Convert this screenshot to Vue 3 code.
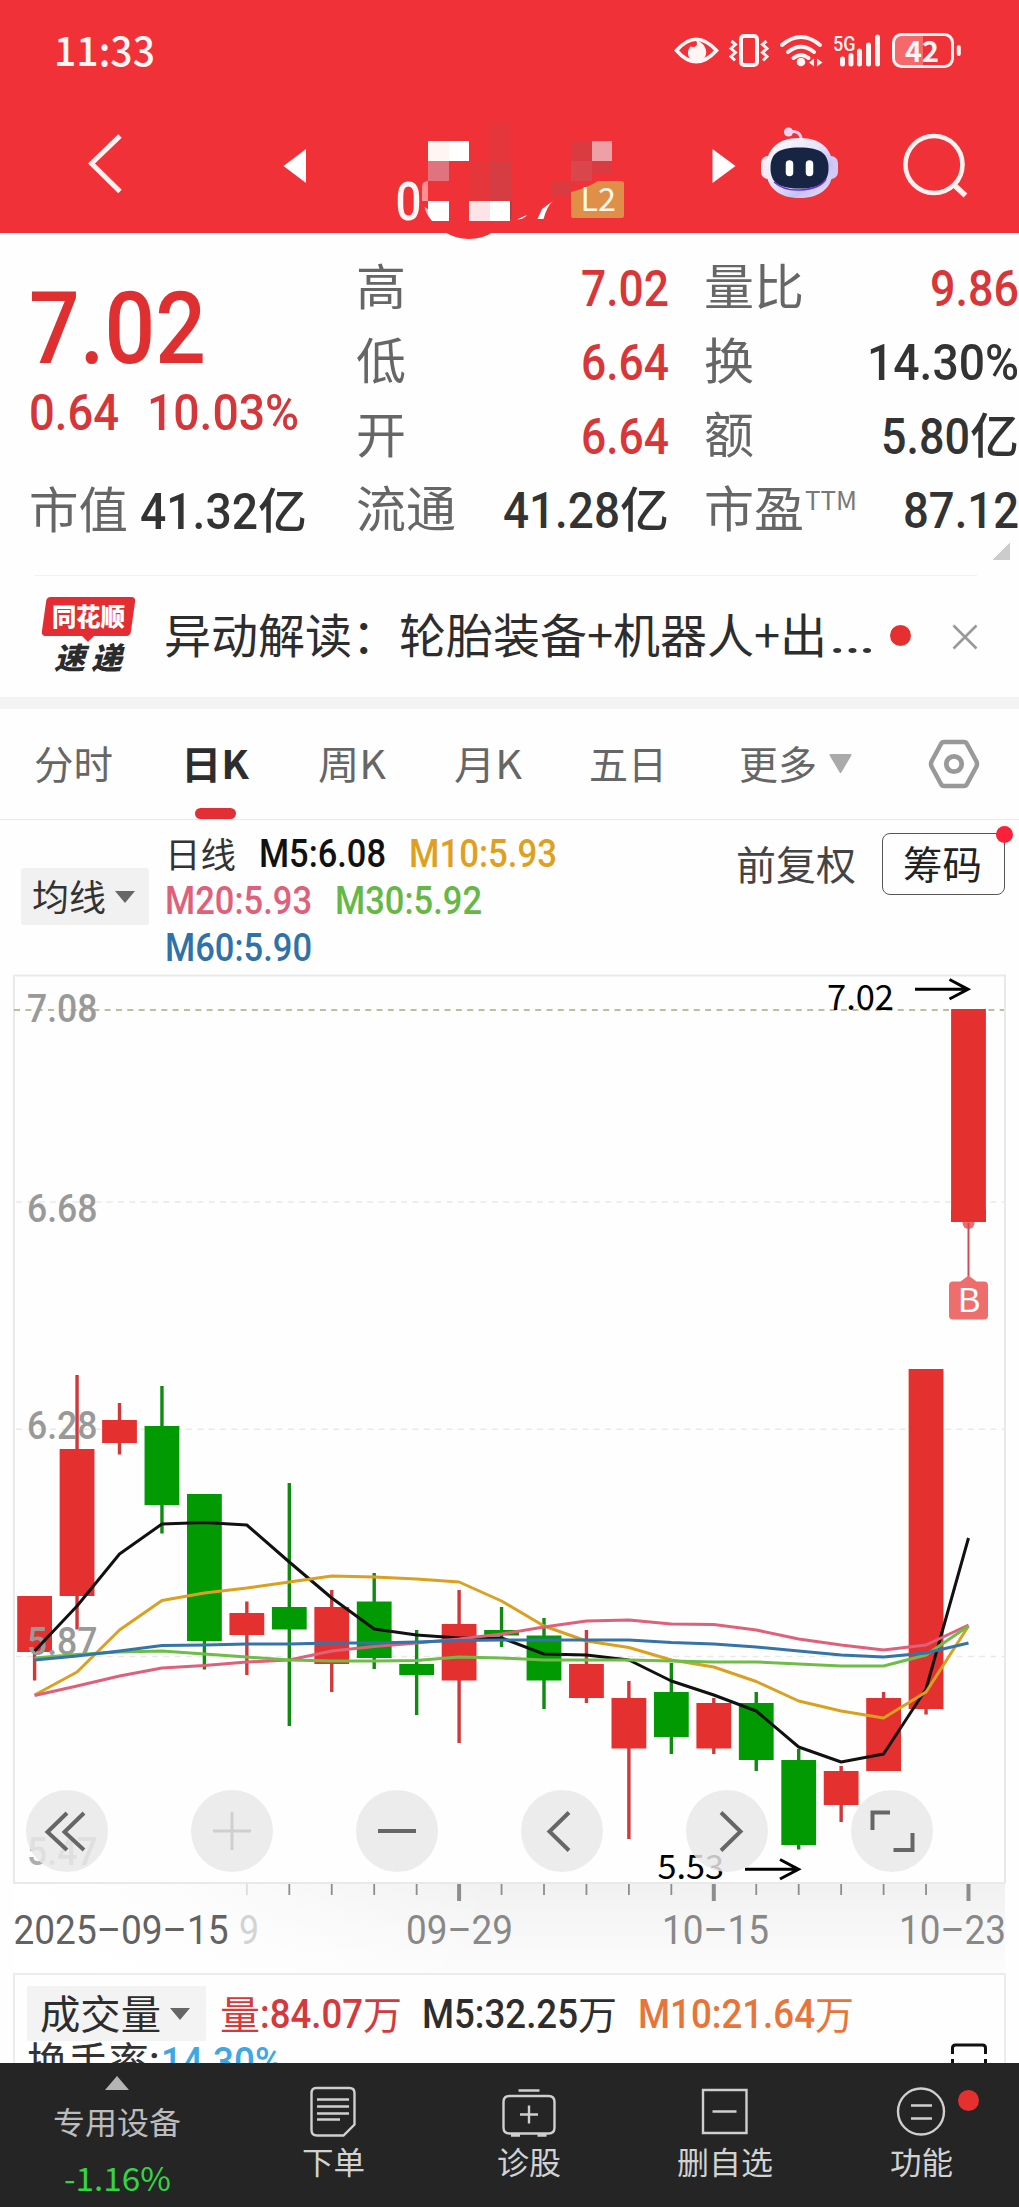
<script setup>
// Squeezes a run of text to the given advance width, like a condensed DIN face.
const vFit = {
  mounted(el, { value }) {
    const natural = el.getBoundingClientRect().width
    if (!natural) return
    el.style.transform = `scaleX(${value / natural})`
    el.style.marginRight = `${value - natural}px`
  },
}

const quotes = [
  [{ k: '高', kw: 50, v: '7.02', w: 88, up: true }, { k: '量比', kw: 100, v: '9.86', w: 89, up: true }],
  [{ k: '低', kw: 50, v: '6.64', w: 88, up: true }, { k: '换', kw: 50, v: '14.30%', w: 152 }],
  [{ k: '开', kw: 50, v: '6.64', w: 88, up: true }, { k: '额', kw: 50, v: '5.80', w: 89, unit: '亿' }],
  [{ k: '流通', kw: 100, v: '41.28', w: 117, unit: '亿' }, { k: '市盈', kw: 100, sup: 'TTM', v: '87.12', w: 116 }],
]

const tabs = [
  { name: '分时', w: 79, x: 34 },
  { name: '日K', w: 68, x: 68, on: true },
  { name: '周K', w: 68, x: 69 },
  { name: '月K', w: 68, x: 68 },
  { name: '五日', w: 78, x: 67 },
  { name: '更多', w: 78, x: 72 },
]

// top wick, body top, body bottom, bottom wick, rising
const candles = [
  [1596, 1596, 1652, 1680.5, 1], [1375, 1449, 1596, 1629.5, 1], [1403, 1420, 1443, 1454.5, 1],
  [1386, 1426, 1505, 1533.5, 0], [1494, 1494, 1641, 1669.5, 0], [1601.5, 1613, 1635, 1675, 1],
  [1483, 1607, 1629.5, 1726, 0], [1590, 1607, 1664, 1692, 1], [1573, 1601.5, 1658, 1669, 0],
  [1630, 1664, 1675, 1715, 0], [1590, 1624, 1680.5, 1743, 1], [1607, 1630, 1635.5, 1647, 0],
  [1618, 1635.5, 1680.5, 1709, 0], [1630, 1664, 1698, 1703, 1], [1681, 1698, 1748.5, 1839, 1],
  [1663, 1692, 1737, 1754, 0], [1698, 1703, 1748.5, 1754, 1], [1692, 1703, 1760, 1771, 0],
  [1749, 1760, 1845, 1849.5, 0], [1766, 1771, 1805, 1822, 1], [1692, 1698, 1771, 1771, 1],
  [1369, 1369, 1709, 1714.5, 1], [1009, 1009, 1222, 1222, 1],
]
const cx = (i) => 34.6 + 42.45 * i

const averages = [
  { c: '#111', y: [1651, 1606, 1554, 1524, 1522.5, 1525, 1562, 1598, 1629, 1635, 1638, 1638, 1654, 1655, 1660, 1681, 1695, 1711, 1747, 1762, 1754, 1689, 1538] },
  { c: '#dba01f', y: [1695, 1672, 1630, 1600.5, 1593, 1588, 1582, 1576, 1577, 1579, 1582, 1601, 1626, 1641, 1647.5, 1660, 1667, 1681.5, 1701, 1711, 1718, 1692, 1626] },
  { c: '#de607a', y: [1695.5, 1686, 1676, 1668, 1665.5, 1662, 1660, 1651, 1646.5, 1643, 1639, 1634, 1627, 1621, 1620, 1624, 1624.5, 1630, 1639, 1645, 1650, 1645, 1625] },
  { c: '#6fbd49', y: [1658, 1654.5, 1652, 1651, 1654, 1657, 1660, 1661, 1661, 1660.5, 1657, 1658, 1660, 1660, 1660, 1661, 1662, 1662, 1664, 1666, 1666, 1655, 1626] },
  { c: '#3474a9', y: [1660, 1656, 1651, 1645.5, 1645, 1644, 1644, 1643, 1643, 1642, 1640.5, 1640, 1640, 1640, 1640, 1642.5, 1644, 1647, 1651, 1655, 1657, 1653, 1643] },
]
const points = (ys) => ys.map((y, i) => `${cx(i)},${y}`).join(' ')

const prices = [['7.08', 1022], ['6.68', 1221.5], ['6.28', 1438.5], ['5.87', 1655], ['5.47', 1865]]
const ticks = Array.from({ length: 18 }, (_, n) => n + 5)
</script>

<template>
  <div class="screen">
    <header class="head">
      <div class="status">
        <span v-fit="101" class="clock">11:33</span>
        <svg class="status-icons" width="290" height="40" viewBox="672 31 290 40" fill="none" stroke="#fff5f4">
          <path d="M676.500 50.500Q696 28 716.500 50.500Q696 73 676.500 50.500Z" stroke-width="3.600" />
          <path d="M696 40.500C699 46 694.500 48 690.500 46.500C685.500 52 688 60.500 696 61.500C704.500 62 708.500 53.500 705 47.500C703.500 43.500 699.500 41 696 40.500Z" fill="#fff5f4" stroke="none" />
          <rect x="741" y="36" width="16" height="29" rx="3" stroke-width="4" />
          <path d="M731.500 41l4 3.500-4.500 4 4.500 4-4.500 4 4 4M766.500 41l-4 3.500 4.500 4-4.500 4 4.500 4-4 4" stroke-width="3" />
          <path d="M782 45Q801 29 820 45M788 52Q801 41.500 814 52M793.500 58Q801 52 808.500 58" stroke-width="4" stroke-linecap="round" />
          <circle cx="801" cy="62" r="4.300" fill="#fff5f4" stroke="none" />
          <path d="M814 58.500v8l-5-4zM817 58.500v8l5.500-4z" fill="#fff5f4" stroke="none" />
          <path d="M842.500 59v5M851 55.500v8.500M859.500 51v13M868.500 45v19M877.500 37v27" stroke-width="5" stroke-linecap="round" />
          <text x="833" y="50.500" font-size="21" font-weight="500" textLength="22.500" lengthAdjust="spacingAndGlyphs" class="svg-num" fill="#fff5f4" stroke="none">5G</text>
          <path d="M900 34.500H923V66.500H900Q893.500 66.500 893.500 60V41Q893.500 34.500 900 34.500Z" fill="#f5686c" stroke="none" />
          <rect x="893.500" y="34.500" width="59" height="32" rx="8" stroke-width="3" />
          <path d="M958.800 47v7" stroke-width="4" stroke-linecap="round" />
          <text x="905" y="61.500" font-size="29" font-weight="700" textLength="34" lengthAdjust="spacingAndGlyphs" class="svg-cjk" fill="#fff5f4" stroke="none">42</text>
        </svg>
      </div>
      <div class="nav">
        <svg class="back" width="38" height="64" viewBox="86 132 38 64"><path d="M120 136L91.500 163.500L120 191.500" fill="none" stroke="#fff1f0" stroke-width="5" /></svg>
        <svg class="prev" width="24" height="36" viewBox="283 148 24 36"><path d="M283.500 166L306 149v34z" fill="#fff" /></svg>
        <svg class="title" width="230" height="120" viewBox="396 120 230 120">
          <ellipse cx="469" cy="217" rx="33" ry="22" fill="#f03137" />
          <text x="395.500" y="219.500" font-size="54" font-weight="500" textLength="26" lengthAdjust="spacingAndGlyphs" class="svg-num" fill="#fff5f4">0</text>
          <path d="M422 201v-15q1-5 6-5v20z" fill="#ff8f90" />
          <path d="M424.500 207q2 9 8 14l-3-11z" fill="#ffb9b9" />
          <path d="M469 161h21v-40h20v80h-41z" fill="#dd3a3f" opacity=".55" />
          <path d="M490 161h21v40h-21z" fill="#d53d42" />
          <path d="M428 141h41v20h-41zM428 201h21v20h-17l-4-6zM490 201h20v20h-20z" fill="#fff" />
          <path d="M428 141h21v20h-21z" fill="#fff6f4" />
          <path d="M469 201h21v20h-21z" fill="#fee4e7" />
          <path d="M428 161h21v20h-21z" fill="#df737e" />
          <path d="M510 201h1.500v18h-1.500z" fill="#9f4248" />
          <path d="M571 141h21v20h-21zM592 161h20v13h-20zM551 181h20v14h-20z" fill="#d93b41" />
          <path d="M571 161h21v20h-21z" fill="#d9474d" />
          <path d="M592 141h20v20h-20z" fill="#eda1a7" />
          <path d="M517 219.500q6 0 10-4.500q-5 2-10 4.500zM537.500 219l4.500-10 11-8q-6 5-9.500 18z" fill="#fff" />
          <path d="M571 192q16-4 27-11h23.500q2.500 0 2.500 2.500v32q0 2.500-2.500 2.500h-48q-2.500 0-2.500-2.500z" fill="#e08f49" />
          <text x="580.500" y="210.500" font-size="32" textLength="35.500" lengthAdjust="spacingAndGlyphs" class="svg-cjk" fill="#fff8ec">L2</text>
        </svg>
        <svg class="next" width="24" height="36" viewBox="712 148 24 36"><path d="M735.500 166L712.500 149v34z" fill="#fff" /></svg>
        <svg class="robot" width="80" height="76" viewBox="760 125 80 76">
          <defs>
            <linearGradient id="shell" x1="0" x2="1" y1="0" y2="1"><stop offset="0" stop-color="#fff" /><stop offset=".45" stop-color="#e8e4fa" /><stop offset=".7" stop-color="#c6c2f5" /><stop offset="1" stop-color="#efe4fb" /></linearGradient>
          </defs>
          <path d="M788 132q13-3 13.500 9" fill="none" stroke="#eec8e6" stroke-width="3" /><circle cx="788.500" cy="132" r="4.600" fill="#efd3ee" />
          <rect x="761" y="156" width="14" height="23" rx="7" fill="#fae9f4" /><rect x="824" y="156" width="14" height="23" rx="7" fill="#d1c9f6" />
          <path d="M799.500 138C823 138 833 151 833 168.500C833 188 820 198 799.500 198C779 198 766 188 766 168.500C766 151 776 138 799.500 138Z" fill="url(#shell)" />
          <path d="M799.500 147.500C821 147.500 828.500 154 828.500 168C828.500 182 821 188.500 799.500 188.500C778 188.500 770.500 182 770.500 168C770.500 154 778 147.500 799.500 147.500Z" fill="#172443" />
          <path d="M774 182Q784 191 800 190Q820 189 826 179" fill="none" stroke="#6b32d2" stroke-width="1.500" />
          <path d="M789.500 164v8.500M809.500 164v8.500" stroke="#fff" stroke-width="7.500" stroke-linecap="round" />
        </svg>
        <svg class="search" width="66" height="66" viewBox="902 132 66 66" fill="none" stroke="#fff1f0" stroke-width="4.600"><circle cx="934" cy="164.500" r="28.500" /><path d="M953 184l12.500 11.500" stroke-width="5.500" /></svg>
      </div>
    </header>

    <section class="quote">
      <div class="main">
        <div class="price"><span v-fit="177">7.02</span></div>
        <div class="change"><span v-fit="90">0.64</span><span v-fit="152">10.03%</span></div>
        <div class="cap">
          <span v-fit="99" class="label">市值</span><span v-fit="118" class="num">41.32</span><span v-fit="49" class="unit">亿</span>
        </div>
      </div>
      <div class="grid">
        <div v-for="(r, i) in quotes" :key="i" class="qrow">
          <div v-for="c in r" :key="c.k" class="cell">
            <span v-fit="c.kw" class="label">{{ c.k }}</span>
            <span v-if="c.sup" v-fit="52" class="sup">{{ c.sup }}</span>
            <span class="val" :class="{ up: c.up }"><span v-fit="c.w" class="num">{{ c.v }}</span><span v-if="c.unit" v-fit="49" class="unit">{{ c.unit }}</span></span>
          </div>
        </div>
      </div>
      <i class="corner"></i>
    </section>

    <section class="news">
      <div class="brand">
        <div class="brand-top"><span v-fit="73">同花顺</span></div>
        <div class="brand-sub"><span v-fit="31">速</span><span v-fit="31">递</span></div>
      </div>
      <span v-fit="663" class="headline">异动解读：轮胎装备+机器人+出</span><span v-fit="48" class="dots">…</span>
      <i class="dot"></i>
      <svg class="close" width="26" height="26" viewBox="0 0 26 26"><path d="M1.500 1.500l23 23M24.500 1.500l-23 23" stroke="#999" stroke-width="2.600" /></svg>
    </section>

    <nav class="tabs">
      <div v-for="t in tabs" :key="t.name" class="tab" :class="{ on: t.on }" :style="{ marginLeft: t.x + 'px' }"><span v-fit="t.w">{{ t.name }}</span></div>
      <svg class="more" width="23" height="20" viewBox="0 0 23 20"><path d="M1.500 1h20L11.500 18z" fill="#aaa" stroke="#aaa" stroke-width="2" stroke-linejoin="round" /></svg>
      <svg class="gear" width="52" height="50" viewBox="0 0 52 50" fill="none" stroke="#999" stroke-width="4.500" stroke-linejoin="round"><path d="M16 3H36Q38 3 39 5L48.500 22.500Q49.500 25 48.500 27.500L39 45Q38 47 36 47H16Q14 47 13 45L3.500 27.500Q2.500 25 3.500 22.500L13 5Q14 3 16 3Z" /><circle cx="26" cy="25" r="7.700" stroke-width="4.800" /></svg>
    </nav>

    <section class="legend">
      <div class="chip"><span v-fit="74">均线</span><i class="caret"></i></div>
      <div class="averages">
        <div><span v-fit="71" class="zh">日线</span><span v-fit="127" class="m5">M5:6.08</span><span v-fit="148" class="m10">M10:5.93</span></div>
        <div><span v-fit="147" class="m20">M20:5.93</span><span v-fit="147" class="m30">M30:5.92</span></div>
        <div><span v-fit="147" class="m60">M60:5.90</span></div>
      </div>
      <span v-fit="120" class="adjust">前复权</span>
      <div class="chips"><span v-fit="79">筹码</span><i></i></div>
    </section>

    <section class="chart">
      <svg width="1019" height="998" viewBox="0 975 1019 998">
        <defs>
          <linearGradient id="fadeY" x1="0" x2="0" y1="0" y2="1"><stop offset="0" stop-color="#f1f1f1" /><stop offset=".5" stop-color="#f7f7f7" /><stop offset="1" stop-color="#fcfcfc" /></linearGradient>
          <linearGradient id="fadeX" x1="0" x2="1" y1="0" y2="0"><stop offset="0" stop-color="#fff" /><stop offset=".3" stop-color="#fff" stop-opacity=".85" /><stop offset="1" stop-color="#fff" stop-opacity="0" /></linearGradient>
        </defs>
        <rect x="14" y="1883" width="991" height="90" fill="url(#fadeY)" />
        <rect x="14" y="1883" width="480" height="90" fill="url(#fadeX)" />
        <rect x="14" y="975.500" width="991" height="907.500" fill="#fefefe" stroke="#e8eaea" stroke-width="2" />
        <path d="M16 1202H1004M16 1429.300H1004M16 1656.600H1004" stroke="#e9e9e9" stroke-width="1.500" stroke-dasharray="6 5.330" />
        <path d="M14 1010H1004" stroke="#a9a97c" stroke-width="1.600" stroke-dasharray="6 5.330" />
        <g v-for="(c, i) in candles" :key="i" :fill="c[4] ? '#e53030' : '#029a02'">
          <rect :x="cx(i) - 1.700" :y="c[0]" width="3.400" :height="c[3] - c[0]" :fill="c[4] ? '#cf393b' : '#118a11'" />
          <rect :x="cx(i) - 17.400" :y="c[1]" width="34.800" :height="c[2] - c[1]" />
        </g>
        <text v-for="p in prices" :key="p[0]" x="27" :y="p[1]" font-size="39" font-weight="500" textLength="70.500" lengthAdjust="spacingAndGlyphs" class="svg-num" fill="#999" :opacity="p[0] === '5.47' ? .8 : 1">{{ p[0] }}</text>
        <polyline v-for="a in averages" :key="a.c" :points="points(a.y)" fill="none" :stroke="a.c" stroke-width="3" stroke-linejoin="round" />

        <text x="827" y="1009.500" font-size="35" textLength="67" lengthAdjust="spacingAndGlyphs" class="svg-cjk" fill="#000">7.02</text>
        <path d="M915 989.300H967M949.500 979.500L968 989.300L949.500 999" fill="none" stroke="#000" stroke-width="3" />
        <circle cx="968.500" cy="1223" r="6" fill="#ef6a70" /><rect x="951" y="1210" width="35" height="12" fill="#e53030" />
        <path d="M968.500 1223v54" stroke="#cf4a52" stroke-width="2" />
        <path d="M953 1281.500h7.500l8-6 8 6h7.500q4 0 4 4v30q0 4-4 4h-31q-4 0-4-4v-30q0-4 4-4z" fill="#ee6e6e" />
        <text x="957.500" y="1312" font-size="32" textLength="23" lengthAdjust="spacingAndGlyphs" class="svg-cjk" fill="#fff">B</text>

        <text x="657.500" y="1878.500" font-size="34" textLength="66.500" lengthAdjust="spacingAndGlyphs" class="svg-cjk" fill="#000">5.53</text>
        <path d="M745 1869.300H798M780 1859.500L798.500 1869.300L780 1879" fill="none" stroke="#000" stroke-width="3" />

        <path v-for="i in ticks" :key="i" :d="`M${cx(i)} 1884v${(i - 10) % 6 ? 11 : 17}`" :stroke="i === 5 ? '#ddd' : '#8d8d8d'" :stroke-width="(i - 10) % 6 ? 1.800 : 4" />
        <g class="svg-num" font-size="40" fill="#888">
          <text x="13.500" y="1943.500" textLength="215" lengthAdjust="spacingAndGlyphs" fill="#626262">2025–09–15</text>
          <text x="239" y="1943.500" textLength="20" lengthAdjust="spacingAndGlyphs" fill="#d3d3d3">9</text>
          <text x="406" y="1943.500" textLength="107" lengthAdjust="spacingAndGlyphs">09–29</text>
          <text x="662" y="1943.500" textLength="107" lengthAdjust="spacingAndGlyphs">10–15</text>
          <text x="899" y="1943.500" textLength="107" lengthAdjust="spacingAndGlyphs">10–23</text>
        </g>
      </svg>
      <div class="controls">
        <button><svg viewBox="0 0 82 82"><path d="M41 23L21.500 42L41 60M58 23L38.500 42L58 60" /></svg></button>
        <button class="off"><svg viewBox="0 0 82 82"><path d="M41 22v38M22 41h38" /></svg></button>
        <button><svg viewBox="0 0 82 82"><path d="M22 41h38" stroke-width="4.500" /></svg></button>
        <button><svg viewBox="0 0 82 82"><path d="M48 22.500L28.500 41.500L48 60.500" /></svg></button>
        <button><svg viewBox="0 0 82 82"><path d="M35 22.500L54.500 41.500L35 60.500" /></svg></button>
        <button><svg viewBox="0 0 82 82"><path d="M21.500 40V22.500H39M61.500 43V60H42.500" /></svg></button>
      </div>
    </section>

    <section class="volume">
      <div class="vrow">
        <div class="vchip"><span v-fit="121">成交量</span><i class="caret"></i></div>
        <span v-fit="40" class="vz vol">量</span><span v-fit="103" class="vol">:84.07</span><span v-fit="39" class="vz vol">万</span>
        <span v-fit="156" class="v5">M5:32.25</span><span v-fit="39" class="vz">万</span>
        <span v-fit="177" class="v10">M10:21.64</span><span v-fit="39" class="vz orange">万</span>
      </div>
      <div class="turn"><span v-fit="122" class="zh">换手率</span><span class="colon">:</span><span v-fit="121" class="pct">14.30%</span>
        <svg class="expand" width="36" height="24" viewBox="0 0 36 24"><path d="M1.500 11V5Q1.500 2 4.500 2H31.500Q34.500 2 34.500 5V11M1.500 16v8M34.500 16v8" fill="none" stroke="#111" stroke-width="3" /></svg>
      </div>
    </section>

    <footer class="dock">
      <div class="sector"><i></i><span v-fit="128">专用设备</span><b v-fit="107">-1.16%</b></div>
      <div class="item">
        <svg width="50" height="54" viewBox="307 2084 50 54"><path d="M315 2088h33.500q5 0 5 5v31.500l-11 11H316q-5.500 0-5.500-5.500v-36.500q0-5.500 4.500-5.500zM316 2099.500h32M316 2106.500h32M316 2113.500h32M316 2119.500h23" /></svg>
        <span v-fit="63">下单</span>
      </div>
      <div class="item">
        <svg width="56" height="54" viewBox="500.500 2084 56 54"><path d="M518 2090.500h21M509 2096h39q6 0 6 6v25.500q0 6-6 6h-39q-6 0-6-6V2102q0-6 6-6zM528.500 2105.500v18M519.500 2114.500h18M510.500 2135.500h9M537 2135.500h9" /></svg>
        <span v-fit="64">诊股</span>
      </div>
      <div class="item">
        <svg width="50" height="54" viewBox="699.500 2084 50 54"><path d="M702.500 2090h43.500v43h-43.500zM712 2111.500h24" /></svg>
        <span v-fit="96">删自选</span>
      </div>
      <div class="item">
        <svg width="54" height="54" viewBox="894 2084 54 54"><circle cx="921" cy="2111.500" r="23" /><path d="M911 2105.500h21M911 2118.500h21" /></svg>
        <span v-fit="63">功能</span><i class="badge"></i>
      </div>
    </footer>
  </div>
</template>

<style>
body { background: #fefefe; }
</style>

<style scoped>
.screen { width: 1019px; height: 2207px; overflow: hidden; background: #fefefe; font-family: Roboto, "Noto Sans CJK SC", sans-serif; color: #333; display: flex; flex-direction: column; }
.screen * { box-sizing: border-box; }
.screen > * { flex: none; }
span, b { display: inline-block; flex: none; white-space: nowrap; transform-origin: 0 50%; }
svg { display: block; flex: none; overflow: visible; }
i { display: block; flex: none; }
.svg-num { font-family: Roboto, sans-serif; }
.svg-cjk { font-family: "Noto Sans CJK SC", sans-serif; }

.head { height: 233px; background: #f03137; }
.status { height: 102px; display: flex; align-items: center; padding-left: 54px; }
.clock { font: 500 41px/60px "Noto Sans CJK SC", sans-serif; color: #fff5f4; margin-top: -6px; }
.status-icons { margin-left: 517px; }
.nav { height: 131px; display: flex; align-items: flex-start; }
.back { margin: 30px 0 0 86px; }
.prev { margin: 46px 0 0 159px; }
.title { margin: 18px 0 0 89px; position: relative; z-index: 1; }
.next { margin: 46px 0 0 86px; }
.robot { margin: 23px 0 0 24px; }
.search { margin: 30px 0 0 62px; }

.quote { height: 343px; display: flex; position: relative; padding-top: 17px; }
.quote::after { content: ""; position: absolute; left: 35px; right: 42px; bottom: 0; height: 1px; background: #f2f2f2; }
.main { width: 357px; padding-left: 29px; color: #e02f31; }
.price { height: 120px; margin-top: 19px; display: flex; align-items: center; font: 500 101px/120px Roboto, sans-serif; }
.change { height: 60px; margin-top: -6px; display: flex; gap: 28px; font: 500 50px/60px Roboto, sans-serif; color: #d43639; }
.cap { height: 74px; margin-top: 30px; display: flex; align-items: center; color: #333; }
.cap .num { margin-left: 12px; }
.label { font: 400 49px/74px "Noto Sans CJK SC", sans-serif; color: #666; margin-top: -6px; }
.cap, .qrow { line-height: 74px; }
.num { font: 500 50px/74px Roboto, sans-serif; margin-top: 3px; }
.unit { font: 500 48px/74px "Noto Sans CJK SC", sans-serif; margin-top: -7px; }
.sup { font: 400 26px/30px "Noto Sans CJK SC", sans-serif; color: #777; margin: -20px 0 0 1px; }
.grid { flex: 1; }
.qrow { height: 74px; display: flex; }
.cell { height: 74px; width: 313px; display: flex; align-items: center; }
.cell + .cell { width: 315px; margin-left: 35px; }
.val { display: flex; margin-left: auto; align-items: center; color: #333; }
.val.up { color: #d83638; }
.corner { position: absolute; right: 9px; bottom: 16px; width: 18px; height: 18px; background: linear-gradient(135deg, transparent 50%, #ccc 50%); }

.news { height: 121px; display: flex; align-items: center; }
.brand { width: 93px; margin-left: 42px; height: 80px; }
.brand-top { position: relative; height: 39px; color: #fff; font: 900 25px/39px "Noto Sans CJK SC", sans-serif; padding-left: 10px; }
.brand-top::before { content: ""; position: absolute; inset: 0 2px; background: #e32d33; border-radius: 4px; transform: skewX(-8deg); }
.brand-top::after { content: ""; position: absolute; left: 39px; top: 38px; border: 7px solid transparent; border-top-color: #e32d33; border-bottom: 0; }
.brand-top span { position: relative; top: -1px; }
.brand-sub { display: flex; gap: 6px; padding-left: 12px; font: italic 900 30px/36px "Noto Sans CJK SC", sans-serif; color: #2b2b2b; padding-top: 2px; height: 40px; }
.headline { margin-left: 29px; font: 400 47px/60px "Noto Sans CJK SC", sans-serif; margin-top: -7px; color: #2d2d2d; }
.dots { font: 400 47px/60px Roboto, sans-serif; margin-left: 1px; }
.dot { width: 21px; height: 21px; border-radius: 50%; background: #e5302f; margin-left: 13.500px; margin-top: -2px; }
.close { margin-left: 41px; }

.tabs { height: 123px; border-top: 12px solid #f3f3f3; border-bottom: 1px solid #e9e9e9; display: flex; align-items: center; font: 400 39px/60px "Noto Sans CJK SC", sans-serif; color: #666; }
.tab { height: 110px; display: flex; align-items: center; position: relative; padding-bottom: 4px; }
.tab.on { color: #2d2d2d; font-weight: 700; }
.tab.on::after { content: ""; position: absolute; left: 14px; bottom: 0; width: 41px; height: 11px; border-radius: 6px; background: #e22f36; }
.more { margin-left: 12px; }
.gear { margin-left: 76px; }

.legend { height: 155px; display: flex; align-items: flex-start; }
.chip { width: 128px; height: 57px; margin: 48px 0 0 21px; background: #f1f1f1; border-radius: 3px; display: flex; align-items: center; padding-left: 11px; font: 400 36px/57px "Noto Sans CJK SC", sans-serif; }
.chip span { margin-top: -2px; }
.vchip span { margin-top: -3px; }
.caret { width: 0; border: 10px solid transparent; border-top: 12px solid #666; border-bottom: 0; margin-left: 9px; }
.averages { width: 588px; padding: 11px 0 0 16px; font: 500 38px/47px Roboto, sans-serif; }
.averages > div { display: flex; height: 47px; align-items: center; gap: 23px; }
.averages .zh { font: 400 35px/47px "Noto Sans CJK SC", sans-serif; margin: -5px 3px 0 0; }
.m5 { color: #111; }
.m10 { color: #dfa01f; }
.m20 { color: #e05f7a; }
.m30 { color: #65b845; }
.m60 { color: #3072a8; }
.adjust { font: 400 40px/60px "Noto Sans CJK SC", sans-serif; margin-top: 13px; color: #444; margin-left: -1px; }
.chips { position: relative; width: 123px; height: 62px; margin: 13px 0 0 26px; border: 1.500px solid #555; border-radius: 8px; display: flex; align-items: center; padding-left: 20px; font: 400 39px/58px "Noto Sans CJK SC", sans-serif; color: #222; }
.chips span { margin-top: -4px; }
.chips i { position: absolute; width: 17px; height: 17px; border-radius: 50%; background: #fb2138; right: -9px; top: -8px; }

.chart { position: relative; height: 998px; }
.controls { position: absolute; left: 25.500px; top: 815px; display: flex; gap: 83.200px; }
.controls button { width: 82px; height: 82px; border: 0; padding: 0; border-radius: 50%; background: rgba(234, 232, 233, .84); }
.controls path { fill: none; stroke: #666; stroke-width: 4; }
.controls .off path { stroke: #cfcfcf; stroke-width: 3; }

.volume { height: 90px; margin: 0 13px; border: 2px solid #ececec; border-bottom: 0; overflow: hidden; background: #fefefe; }
.vrow { display: flex; align-items: center; height: 55px; margin-top: 11px; padding-left: 12px; font: 500 41px/55px Roboto, sans-serif; color: #2d2d2d; }
.vrow > span { position: relative; top: 1px; }
.vchip { width: 179px; height: 55px; background: #f3f3f3; display: flex; align-items: center; padding-left: 13px; font: 400 40px/55px "Noto Sans CJK SC", sans-serif; margin-right: 14px; }
.vz { font: 400 39px/55px "Noto Sans CJK SC", sans-serif; margin-top: -5px; }
.vol { color: #d5393b; }
.v5 { margin-left: 20px; }
.v10 { margin-left: 21px; color: #e9743a; }
.orange { color: #e9743a; }
.turn { display: flex; padding-left: 12px; height: 40px; font: 500 40px/44px Roboto, sans-serif; }
.turn .zh { font: 400 41px/44px "Noto Sans CJK SC", sans-serif; margin-top: -4px; }
.turn .colon { width: 12px; margin-top: -1px; }
.pct { color: #3da8e2; }
.expand { margin: 2px 0 0 669px; }

.dock { height: 144px; background: #252525; display: flex; color: #d2d2d2; z-index: 1; }
.dock span { font: 400 31px/44px "Noto Sans CJK SC", sans-serif; }
.sector { width: 235px; display: flex; flex-direction: column; align-items: flex-start; padding: 13px 0 0 53px; color: #bcbcbc; }
.sector i { border: 12.500px solid transparent; border-bottom: 14px solid #b5b5b5; border-top: 0; margin-left: 52px; }
.sector span { margin-top: 9px; }
.sector b { font: 400 32px/44px "Noto Sans CJK SC", sans-serif; color: #33d543; margin: 12px 0 0 11px; }
.item { width: 196px; position: relative; display: flex; flex-direction: column; align-items: center; padding-top: 21px; }
.item svg { fill: none; stroke: #cfcfcf; stroke-width: 2.400; }
.item span { margin-top: 1px; }
.item .badge { position: absolute; width: 21px; height: 21px; border-radius: 50%; background: #e5302f; left: 134.500px; top: 27px; }
</style>
